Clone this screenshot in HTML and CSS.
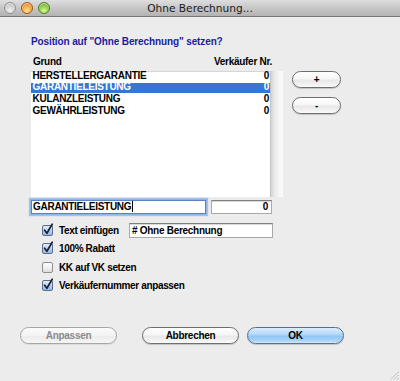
FILE: index.html
```html
<!DOCTYPE html>
<html lang="de">
<head>
<meta charset="utf-8">
<title>Ohne Berechnung...</title>
<link rel="stylesheet" href="styles.css">
</head>
<body>
<div class="window">
  <div class="titlebar">
    <div class="lights">
      <span class="light gray"></span>
      <span class="light orange"></span>
      <span class="light green"></span>
    </div>
    <div class="title">Ohne Berechnung...</div>
    <div></div>
  </div>

  <div class="content">
    <p class="heading">Position auf "Ohne Berechnung" setzen?</p>

    <div class="main">
      <div class="listcol">
        <div class="listhead"><span>Grund</span><span>Verkäufer Nr.</span></div>
        <div class="listbox">
          <div class="rows">
            <div class="row"><span>HERSTELLERGARANTIE</span><span>0</span></div>
            <div class="row selected"><span>GARANTIELEISTUNG</span><span>0</span></div>
            <div class="row"><span>KULANZLEISTUNG</span><span>0</span></div>
            <div class="row"><span>GEWÄHRLEISTUNG</span><span>0</span></div>
          </div>
          <div class="scroll"></div>
        </div>
      </div>
      <div class="side">
        <div class="btn small">+</div>
        <div class="btn small">-</div>
      </div>
    </div>

    <div class="editrow">
      <div class="field focus">GARANTIELEISTUNG<span class="caret"></span></div>
      <div class="field num">0</div>
    </div>

    <div class="checks">
      <div class="check">
        <svg class="box" width="12" height="13" viewBox="0 0 12 13"><defs><linearGradient id="cb1" x1="0" y1="0" x2="0" y2="1"><stop offset="0" stop-color="#e8f1fb"/><stop offset="0.5" stop-color="#b7d2f0"/><stop offset="1" stop-color="#8cb9ea"/></linearGradient></defs><rect x="0.5" y="2.5" width="10" height="10" rx="1.5" fill="url(#cb1)" stroke="#5d6f8c"/><path d="M2.6 7.2 L4.9 10.3 L10.2 1.2" fill="none" stroke="#1b2130" stroke-width="1.7" stroke-linecap="round" stroke-linejoin="round"/></svg>
        <span class="label w70">Text einfügen</span>
        <div class="field text">&#35; Ohne Berechnung</div>
      </div>
      <div class="check">
        <svg class="box" width="12" height="13" viewBox="0 0 12 13"><defs><linearGradient id="cb2" x1="0" y1="0" x2="0" y2="1"><stop offset="0" stop-color="#e8f1fb"/><stop offset="0.5" stop-color="#b7d2f0"/><stop offset="1" stop-color="#8cb9ea"/></linearGradient></defs><rect x="0.5" y="2.5" width="10" height="10" rx="1.5" fill="url(#cb2)" stroke="#5d6f8c"/><path d="M2.6 7.2 L4.9 10.3 L10.2 1.2" fill="none" stroke="#1b2130" stroke-width="1.7" stroke-linecap="round" stroke-linejoin="round"/></svg>
        <span class="label">100% Rabatt</span>
      </div>
      <div class="check">
        <svg class="box" width="12" height="13" viewBox="0 0 12 13"><defs><linearGradient id="cb3" x1="0" y1="0" x2="0" y2="1"><stop offset="0" stop-color="#ffffff"/><stop offset="0.5" stop-color="#f0f0f0"/><stop offset="1" stop-color="#dcdcdc"/></linearGradient></defs><rect x="0.5" y="2.5" width="10" height="10" rx="1.5" fill="url(#cb3)" stroke="#8f8f8f"/></svg>
        <span class="label">KK auf VK setzen</span>
      </div>
      <div class="check">
        <svg class="box" width="12" height="13" viewBox="0 0 12 13"><defs><linearGradient id="cb4" x1="0" y1="0" x2="0" y2="1"><stop offset="0" stop-color="#e8f1fb"/><stop offset="0.5" stop-color="#b7d2f0"/><stop offset="1" stop-color="#8cb9ea"/></linearGradient></defs><rect x="0.5" y="2.5" width="10" height="10" rx="1.5" fill="url(#cb4)" stroke="#5d6f8c"/><path d="M2.6 7.2 L4.9 10.3 L10.2 1.2" fill="none" stroke="#1b2130" stroke-width="1.7" stroke-linecap="round" stroke-linejoin="round"/></svg>
        <span class="label">Verkäufernummer anpassen</span>
      </div>
    </div>

    <div class="actions">
      <div class="btn wide disabled">Anpassen</div>
      <div class="group">
        <div class="btn wide">Abbrechen</div>
        <div class="btn wide default">OK</div>
      </div>
    </div>
  </div>

  <svg class="grip" width="9" height="9" viewBox="0 0 9 9"><path d="M8.5 1 L1 8.5 M8.5 4 L4 8.5 M8.5 7 L7 8.5" stroke="#9a9a9a" stroke-width="0.8" fill="none"/><path d="M8.5 2 L2 8.5 M8.5 5 L5 8.5" stroke="#ffffff" stroke-width="0.8" fill="none"/></svg>
</div>
</body>
</html>
```

FILE: styles.css
```css
html, body {
  margin: 0;
  padding: 0;
}

body {
  width: 400px;
  height: 381px;
  overflow: hidden;
  background: #ececec;
  font-family: "Liberation Sans", Arial, sans-serif;
  color: #000;
}

.window {
  position: relative;
  width: 400px;
  height: 381px;
  display: flex;
  flex-direction: column;
}

/* ---------- title bar ---------- */
.titlebar {
  height: 17px;
  box-sizing: border-box;
  border-bottom: 1px solid #777777;
  background: linear-gradient(#dedede, #c6c6c6 50%, #b3b3b3);
  display: grid;
  grid-template-columns: 1fr auto 1fr;
  align-items: center;
}

.lights {
  display: flex;
  gap: 5px;
  padding-left: 4px;
}

.light {
  width: 12px;
  height: 12px;
  box-sizing: border-box;
  border-radius: 50%;
  border: 1px solid #8a8a8a;
  box-shadow: inset 0 1px 1px rgba(255, 255, 255, 0.7);
}

.light.gray {
  background: radial-gradient(circle at 50% 75%, #f2f2f2, #cfcfcf 55%, #a9a9a9);
  border-color: #939393;
}

.light.orange {
  background: radial-gradient(circle at 50% 78%, #ffe79a, #f6ab3e 50%, #d0661c);
  border-color: #a4561c;
}

.light.green {
  background: radial-gradient(circle at 50% 78%, #dcf7a8, #92cf47 50%, #4f951f);
  border-color: #4b7f25;
}

.title {
  font-family: "DejaVu Sans", "Liberation Sans", sans-serif;
  font-size: 10.6px;
  line-height: 16px;
  color: #1a1a1a;
}

/* ---------- content ---------- */
.content {
  display: flex;
  flex-direction: column;
  font-weight: bold;
  font-size: 10px;
  letter-spacing: -0.28px;
}

.heading {
  margin: 18.5px 0 0 31px;
  line-height: 12px;
  color: #1c1c9c;
  letter-spacing: -0.12px;
}

.main {
  display: flex;
  gap: 9px;
  margin-top: 8px;
  padding-left: 31px;
}

.listcol {
  width: 252px;
}

.listhead {
  display: flex;
  justify-content: space-between;
  line-height: 12px;
  padding: 0 11px 0 2px;
  margin-bottom: 3px;
}

.listbox {
  height: 126px;
  display: flex;
  background: #ffffff;
  box-shadow: inset 0 1px 0 #d6d6d6;
}

.rows {
  flex: 1;
}

.row {
  height: 11.7px;
  line-height: 10.6px;
  display: flex;
  justify-content: space-between;
  padding: 0 1px 0 1.5px;
  box-sizing: border-box;
}

.row.selected {
  color: #ffffff;
  background: linear-gradient(#3875d7, #3875d7) 0 0.4px / 100% 10.4px no-repeat;
}

.scroll {
  width: 13px;
  background: linear-gradient(to right, #d3d3d3, #e9e9e9 30%, #f7f7f7 70%, #fbfbfb);
  border-left: 1px solid #c4c4c4;
  box-sizing: border-box;
}

.side {
  display: flex;
  flex-direction: column;
  gap: 9px;
  padding-top: 15px;
}

/* ---------- buttons ---------- */
.btn {
  box-sizing: border-box;
  height: 17px;
  line-height: 15px;
  text-align: center;
  border: 1px solid #6e6e6e;
  border-radius: 9px;
  background: linear-gradient(#ffffff, #f6f6f6 45%, #e8e8e8 55%, #f3f3f3 85%, #fbfbfb);
  box-shadow: 0 1px 1px rgba(0, 0, 0, 0.18);
}

.btn.small {
  width: 49px;
}

.btn.wide {
  width: 97px;
}

.btn.disabled {
  color: #8b8b8b;
  border-color: #a6a6a6;
  background: linear-gradient(#fbfbfb, #f3f3f3 50%, #ececec 55%, #f5f5f5);
  box-shadow: 0 1px 1px rgba(0, 0, 0, 0.08);
}

.btn.default {
  border-color: #5a6f90;
  background: linear-gradient(#dcedfc, #b8dbf8 40%, #93c6f3 55%, #a9d4f8 85%, #d2eafd);
}

/* ---------- fields ---------- */
.editrow {
  display: flex;
  margin-top: 3.5px;
  padding-left: 31px;
  gap: 5px;
}

.field {
  box-sizing: border-box;
  height: 14px;
  line-height: 12px;
  background: #ffffff;
  border: 1px solid #a9a9a9;
  border-top-color: #7f7f7f;
  box-shadow: inset 0 1px 0 #d9d9d9;
  padding: 0 2px;
  white-space: nowrap;
  overflow: hidden;
}

.field.focus {
  width: 175px;
  border-color: #5b83c0;
  box-shadow: 0 0 0 1px #8eb4e8, 0 0 1px 2px rgba(120, 165, 225, 0.6);
  padding-left: 1px;
}

.caret {
  display: inline-block;
  width: 1px;
  height: 11px;
  background: #000;
  vertical-align: -2px;
  margin-left: 1px;
}

.field.num {
  width: 61px;
  text-align: right;
  padding-right: 3px;
}

.field.text {
  width: 144px;
  height: 15px;
  line-height: 13px;
}

/* ---------- checkboxes ---------- */
.checks {
  margin-top: 7.25px;
  padding-left: 42px;
}

.check {
  height: 18.5px;
  display: flex;
  align-items: center;
}

.box {
  display: block;
  margin-top: -3px;
  margin-right: 5px;
}

.label {
  line-height: 12px;
  letter-spacing: -0.35px;
}

.label.w70 {
  width: 70px;
}

/* ---------- actions ---------- */
.actions {
  display: flex;
  gap: 25px;
  margin-top: 31.5px;
  padding-left: 20px;
}

.group {
  display: flex;
  gap: 8px;
}

.grip {
  position: absolute;
  right: 1px;
  bottom: 1px;
}
```
